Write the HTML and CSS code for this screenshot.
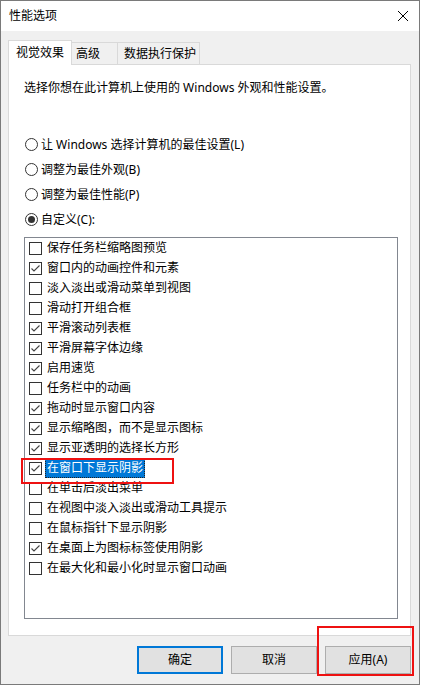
FILE: index.html
```html
<!DOCTYPE html>
<html lang="zh-CN">
<head>
<meta charset="utf-8">
<title>性能选项</title>
<link rel="stylesheet" href="styles.css">
</head>
<body>
<div class="window">
  <div class="titlebar">
    <span class="title">性能选项</span>
    <svg class="close" width="12" height="12" viewBox="0 0 12 12"><path d="M1 1 L11 11 M11 1 L1 11" stroke="#000" stroke-width="1" fill="none"/></svg>
  </div>
  <div class="content">
    <div class="tabs">
      <div class="tab tab-active">视觉效果</div>
      <div class="tab tab-2">高级</div>
      <div class="tab tab-3">数据执行保护</div>
    </div>
    <div class="panel">
      <p class="desc">选择你想在此计算机上使用的 Windows 外观和性能设置。</p>
      <div class="radios">
        <div class="radio-row"><span class="radio"></span><span>让 Windows 选择计算机的最佳设置(L)</span></div>
        <div class="radio-row"><span class="radio"></span><span>调整为最佳外观(B)</span></div>
        <div class="radio-row"><span class="radio"></span><span>调整为最佳性能(P)</span></div>
        <div class="radio-row"><span class="radio radio-on"></span><span>自定义(C):</span></div>
      </div>
      <div class="listbox">
        <div class="item"><span class="cb"></span><span class="label">保存任务栏缩略图预览</span></div>
        <div class="item"><span class="cb"><svg width="11" height="11" viewBox="0 0 11 11"><path d="M1.5 5.5 L4 8 L9.5 2.5" stroke="#444" stroke-width="1.1" fill="none"/></svg></span><span class="label">窗口内的动画控件和元素</span></div>
        <div class="item"><span class="cb"></span><span class="label">淡入淡出或滑动菜单到视图</span></div>
        <div class="item"><span class="cb"></span><span class="label">滑动打开组合框</span></div>
        <div class="item"><span class="cb"><svg width="11" height="11" viewBox="0 0 11 11"><path d="M1.5 5.5 L4 8 L9.5 2.5" stroke="#444" stroke-width="1.1" fill="none"/></svg></span><span class="label">平滑滚动列表框</span></div>
        <div class="item"><span class="cb"><svg width="11" height="11" viewBox="0 0 11 11"><path d="M1.5 5.5 L4 8 L9.5 2.5" stroke="#444" stroke-width="1.1" fill="none"/></svg></span><span class="label">平滑屏幕字体边缘</span></div>
        <div class="item"><span class="cb"><svg width="11" height="11" viewBox="0 0 11 11"><path d="M1.5 5.5 L4 8 L9.5 2.5" stroke="#444" stroke-width="1.1" fill="none"/></svg></span><span class="label">启用速览</span></div>
        <div class="item"><span class="cb"></span><span class="label">任务栏中的动画</span></div>
        <div class="item"><span class="cb"><svg width="11" height="11" viewBox="0 0 11 11"><path d="M1.5 5.5 L4 8 L9.5 2.5" stroke="#444" stroke-width="1.1" fill="none"/></svg></span><span class="label">拖动时显示窗口内容</span></div>
        <div class="item"><span class="cb"><svg width="11" height="11" viewBox="0 0 11 11"><path d="M1.5 5.5 L4 8 L9.5 2.5" stroke="#444" stroke-width="1.1" fill="none"/></svg></span><span class="label">显示缩略图，而不是显示图标</span></div>
        <div class="item"><span class="cb"><svg width="11" height="11" viewBox="0 0 11 11"><path d="M1.5 5.5 L4 8 L9.5 2.5" stroke="#444" stroke-width="1.1" fill="none"/></svg></span><span class="label">显示亚透明的选择长方形</span></div>
        <div class="item"><span class="cb"><svg width="11" height="11" viewBox="0 0 11 11"><path d="M1.5 5.5 L4 8 L9.5 2.5" stroke="#444" stroke-width="1.1" fill="none"/></svg></span><span class="label label-sel">在窗口下显示阴影</span></div>
        <div class="item"><span class="cb"></span><span class="label">在单击后淡出菜单</span></div>
        <div class="item"><span class="cb"></span><span class="label">在视图中淡入淡出或滑动工具提示</span></div>
        <div class="item"><span class="cb"></span><span class="label">在鼠标指针下显示阴影</span></div>
        <div class="item"><span class="cb"><svg width="11" height="11" viewBox="0 0 11 11"><path d="M1.5 5.5 L4 8 L9.5 2.5" stroke="#444" stroke-width="1.1" fill="none"/></svg></span><span class="label">在桌面上为图标标签使用阴影</span></div>
        <div class="item"><span class="cb"></span><span class="label">在最大化和最小化时显示窗口动画</span></div>
      </div>
    </div>
    <div class="buttons">
      <div class="btn btn-default">确定</div>
      <div class="btn">取消</div>
      <div class="btn">应用(A)</div>
    </div>
  </div>
  <div class="mark mark-1"></div>
  <div class="mark mark-2"></div>
</div>
</body>
</html>
```

FILE: styles.css
```css
* { box-sizing: border-box; }
html, body {
  margin: 0;
  padding: 0;
  background: #ffffff;
}
body {
  font-family: "Noto Sans", "Noto Sans CJK SC", sans-serif;
  font-size: 12px;
  line-height: 16px;
  color: #000;
}
.window {
  position: relative;
  width: 420px;
  height: 685px;
  border: 1px solid #7a7a7a;
  background: #f0f0f0;
  display: flex;
  flex-direction: column;
}
.titlebar {
  height: 30px;
  background: #ffffff;
  display: flex;
  align-items: center;
  justify-content: space-between;
  padding: 0 8px 0 8px;
}
.title {
  font-size: 12px;
}
.close {
  margin-right: 2px;
}
.content {
  padding: 9px 8px 0 7px;
  display: flex;
  flex-direction: column;
}
.tabs {
  display: flex;
  align-items: flex-end;
  height: 24px;
}
.tab {
  height: 22px;
  border: 1px solid #d9d9d9;
  border-bottom: none;
  border-left: none;
  background: #f0f0f0;
  line-height: 21px;
  white-space: nowrap;
}
.tab-active {
  position: relative;
  z-index: 1;
  height: 25px;
  margin-bottom: -1px;
  width: 64px;
  border-left: 1px solid #d9d9d9;
  background: #fff;
  padding-left: 7px;
  line-height: 23px;
}
.tab-2 {
  width: 46px;
  padding-left: 4px;
}
.tab-3 {
  width: 82px;
  padding-left: 6px;
}
.panel {
  height: 572px;
  border: 1px solid #d9d9d9;
  background: #ffffff;
  padding: 15px 12px 0 15px;
}
.desc {
  margin: 0;
  height: 16px;
}
.radios {
  margin-top: 36px;
  display: flex;
  flex-direction: column;
}
.radio-row {
  height: 25px;
  display: flex;
  align-items: center;
  gap: 3px;
  padding-left: 1px;
}
.radio {
  width: 13px;
  height: 13px;
  border: 1px solid #333;
  border-radius: 50%;
  background: #fff;
  display: flex;
  align-items: center;
  justify-content: center;
}
.radio-on::after {
  content: "";
  width: 7px;
  height: 7px;
  border-radius: 50%;
  background: #333;
}
.listbox {
  margin-top: 5px;
  width: 374px;
  height: 382px;
  border: 1px solid #828790;
  background: #fff;
  display: flex;
  flex-direction: column;
}
.item {
  height: 20px;
  display: flex;
  align-items: center;
  padding-left: 4px;
}
.cb {
  width: 13px;
  height: 13px;
  border: 1px solid #333;
  background: #fff;
  display: flex;
  align-items: center;
  justify-content: center;
  flex: none;
}
.label {
  margin-left: 3px;
  padding: 2px 2px;
  white-space: nowrap;
}
.label-sel {
  background: #0078d7;
  color: #fff;
  outline: 1px dotted #222;
  outline-offset: -1px;
}
.buttons {
  margin-top: 10px;
  display: flex;
  justify-content: flex-end;
  gap: 8px;
}
.btn {
  width: 86px;
  height: 28px;
  border: 1px solid #adadad;
  background: #e1e1e1;
  display: flex;
  align-items: center;
  justify-content: center;
}
.btn-default {
  border: 2px solid #0078d7;
}
.mark {
  position: absolute;
  border: 2px solid #ee1111;
}
.mark-1 {
  left: 20px;
  top: 457px;
  width: 153px;
  height: 26px;
}
.mark-2 {
  left: 316px;
  top: 625px;
  width: 97px;
  height: 50px;
}
```
